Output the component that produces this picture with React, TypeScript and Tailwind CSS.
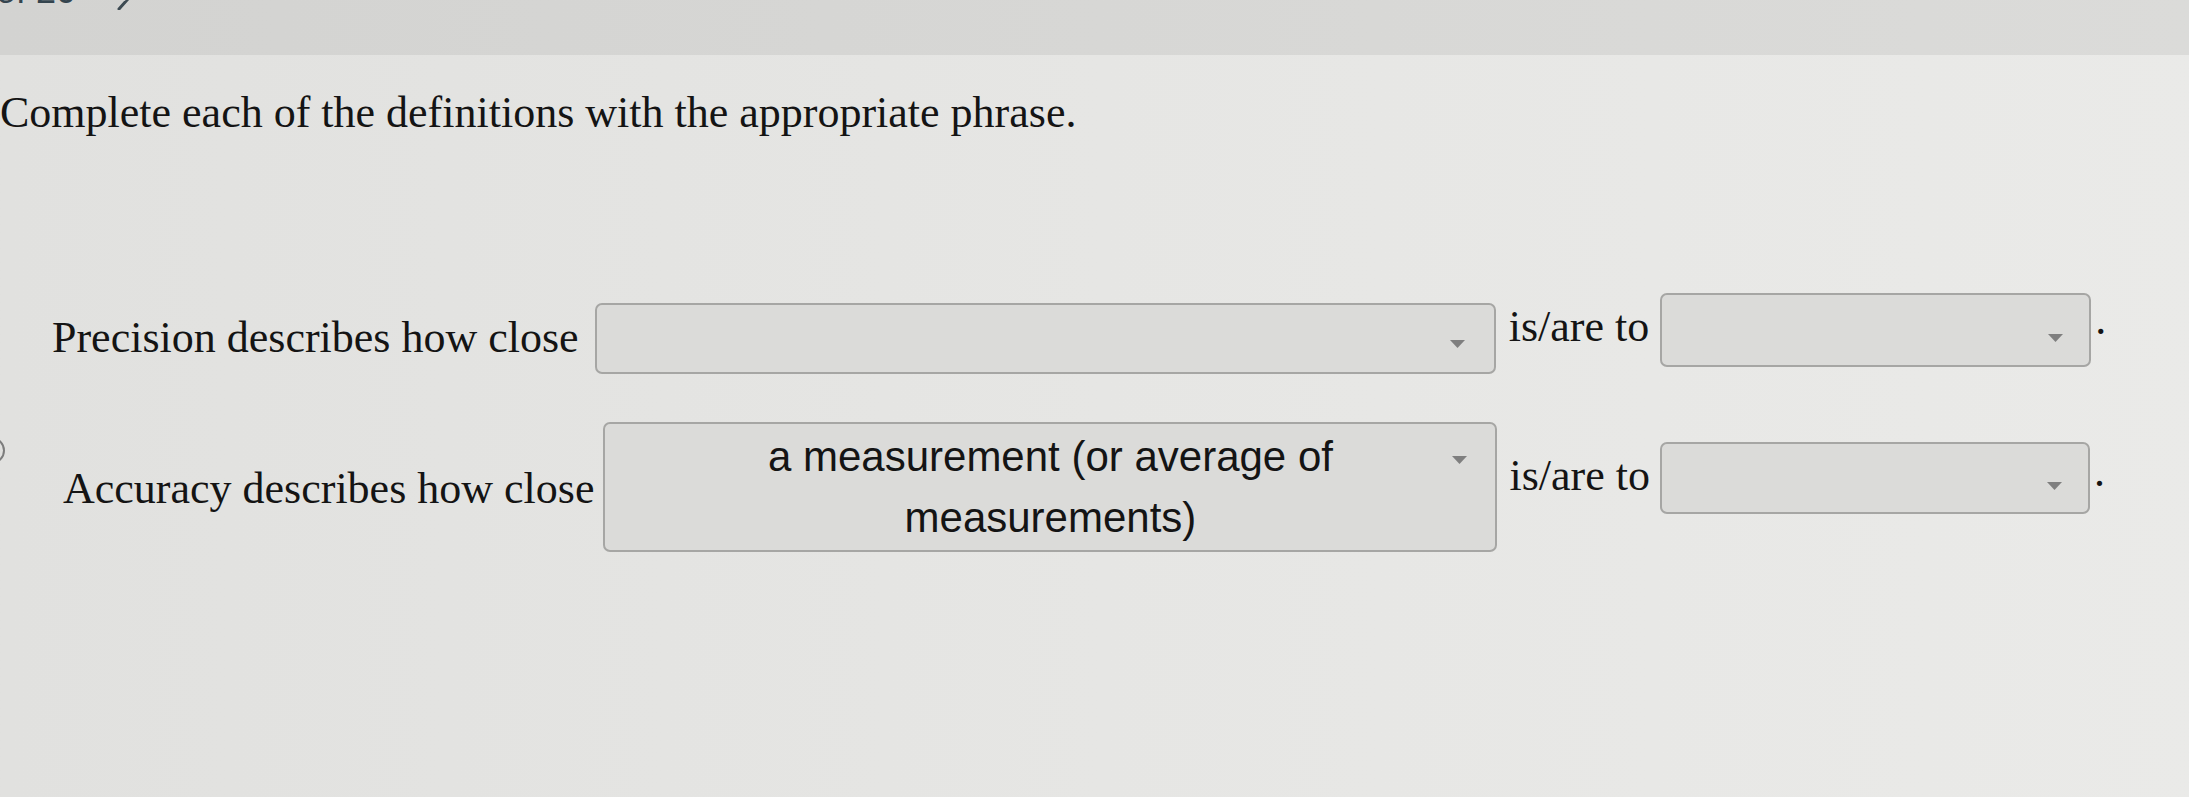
import React from 'react';

const serif = "font-['Liberation_Serif','Times_New_Roman',serif]";
const sans = "font-['Liberation_Sans',Arial,sans-serif]";

function Caret({ className }: { className: string }) {
    return (
        <svg
            width="15"
            height="8"
            viewBox="0 0 15 8"
            className={`absolute ${className}`}
            aria-hidden="true"
        >
            <path d="M0 0 L15 0 L7.5 8 Z" fill="#7f7f7f" />
        </svg>
    );
}

function Blank({
    className,
    caret,
    children,
}: {
    className: string;
    caret: string;
    children?: React.ReactNode;
}) {
    return (
        <div
            className={`relative shrink-0 rounded-[7px] border-2 border-[#a6a6a4] bg-[#dbdbd9] ${className}`}
        >
            {children}
            <Caret className={caret} />
        </div>
    );
}

export default function App() {
    return (
        <div className="relative h-[797px] w-[2189px] overflow-hidden bg-gradient-to-r from-[#e1e1df] via-[#e6e6e4] to-[#eaeae8]">
            {/* clipped header bar */}
            <div className="flex h-[55px] items-start overflow-hidden bg-gradient-to-r from-[#d3d3d1] to-[#dbdbd9]">
                <span className={`${sans} -ml-[4px] -mt-[27px] text-[36px] leading-[36px] text-[#34444e]`}>
                    of 20
                </span>
                <svg width="20" height="20" viewBox="0 0 20 20" className="-mt-[10px] ml-[38px]" aria-hidden="true">
                    <path d="M3 2 L13 10 L5 19" fill="none" stroke="#3d4a52" strokeWidth="3" strokeLinecap="round" />
                </svg>
            </div>

            {/* left rail, mostly cut off */}
            <div className="absolute left-[-22px] top-[437px] h-[27px] w-[27px] rounded-full border-2 border-[#7d7d7d]" />

            <h1 className={`${serif} mt-[36px] text-[44px] leading-[44px] text-[#141414]`}>
                Complete each of the definitions with the appropriate phrase.
            </h1>

            {/* Precision row */}
            <div className={`${serif} mt-[158px] flex items-start pl-[52px] text-[44px] leading-[44px] text-[#141414]`}>
                <span className="mt-[23px] whitespace-nowrap">Precision describes how close</span>
                <Blank className="ml-[16px] mt-[10px] h-[71px] w-[901px]" caret="right-[29px] top-[35px]" />
                <span className="ml-[13px] mt-[12px] whitespace-nowrap">is/are to</span>
                <Blank className="ml-[11px] h-[74px] w-[431px]" caret="right-[26px] top-[39px]" />
                <span className="ml-[4px] mt-[5px]">.</span>
            </div>

            {/* Accuracy row */}
            <div className={`${serif} mt-[48px] flex items-start pl-[63px] text-[44px] leading-[44px] text-[#141414]`}>
                <span className="mt-[45px] whitespace-nowrap">Accuracy describes how close</span>
                <Blank className="ml-[9px] h-[130px] w-[894px]" caret="right-[28px] top-[32px]">
                    <div className={`${sans} px-[70px] pt-[2px] text-center text-[42px] leading-[61px] text-[#141414]`}>
                        a measurement (or average of measurements)
                    </div>
                </Blank>
                <span className="ml-[12px] mt-[32px] whitespace-nowrap">is/are to</span>
                <Blank className="ml-[10px] mt-[20px] h-[72px] w-[430px]" caret="right-[26px] top-[38px]" />
                <span className="ml-[4px] mt-[28px]">.</span>
            </div>
        </div>
    );
}
